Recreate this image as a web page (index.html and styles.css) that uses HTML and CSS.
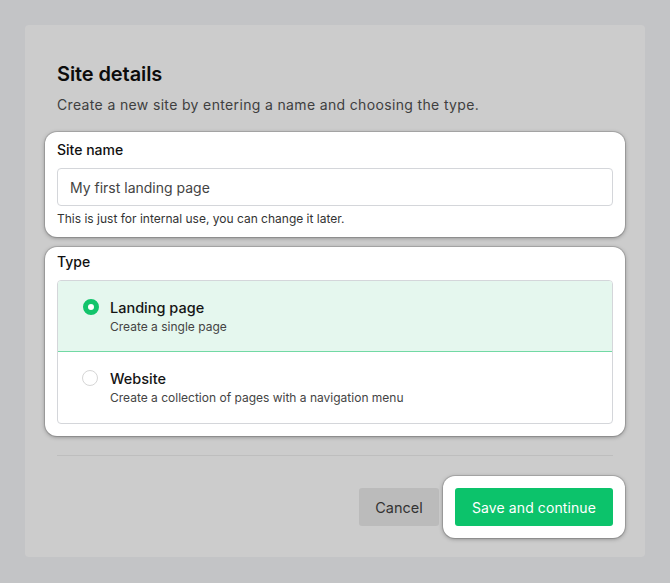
FILE: index.html
```html
<!DOCTYPE html>
<html lang="en">
<head>
<meta charset="utf-8">
<link rel="stylesheet" href="styles.css">
</head>
<body>
<div class="page">
  <div class="card">
    <h1 class="title">Site details</h1>
    <p class="subtitle">Create a new site by entering a name and choosing the type.</p>

    <section class="spot field">
      <label class="label">Site name</label>
      <div class="input">My first landing page</div>
      <p class="help">This is just for internal use, you can change it later.</p>
    </section>

    <section class="spot field type">
      <label class="label">Type</label>
      <div class="options">
        <div class="option selected">
          <span class="radio on"></span>
          <div class="otext">
            <div class="oname">Landing page</div>
            <div class="odesc">Create a single page</div>
          </div>
        </div>
        <div class="option">
          <span class="radio"></span>
          <div class="otext">
            <div class="oname">Website</div>
            <div class="odesc">Create a collection of pages with a navigation menu</div>
          </div>
        </div>
      </div>
    </section>

    <hr class="divider">

    <div class="actions">
      <button class="btn cancel">Cancel</button>
      <div class="spot btnspot">
        <button class="btn primary">Save and continue</button>
      </div>
    </div>
  </div>
</div>
</body>
</html>
```

FILE: styles.css
```css
* { box-sizing: border-box; }
html, body { margin: 0; padding: 0; }
body {
  background: #c3c4c6;
  font-family: Inter, "Noto Sans", "Liberation Sans", sans-serif;
  width: 670px;
  height: 583px;
  overflow: hidden;
}
.page { padding: 25px 25px 0 25px; }
.card {
  width: 620px;
  height: 532px;
  background: #cccccc;
  border-radius: 4px;
  padding: 37px 20px 0 20px;
}
.title {
  margin: 0 0 0 12px;
  font-size: 20px;
  line-height: 24px;
  font-weight: 600;
  color: #0c0c0c;
  letter-spacing: -0.1px;
}
.subtitle {
  margin: 10px 0 0 12px;
  font-size: 14px;
  line-height: 18px;
  color: #3f3f3f;
  letter-spacing: 0.35px;
}
.spot {
  background: #ffffff;
  border-radius: 12px;
  box-shadow: 0 0 0 1px rgba(0,0,0,0.12), 0 1px 4px rgba(0,0,0,0.35);
}
.field {
  margin-top: 18px;
  padding: 9px 12px 11px 12px;
  display: flex;
  flex-direction: column;
}
.field.type { margin-top: 10px; padding-top: 6px; padding-bottom: 12px; }
.label {
  font-size: 14px;
  line-height: 18px;
  font-weight: 500;
  color: #111;
}
.input {
  margin-top: 9px;
  height: 38px;
  border: 1px solid #d4d6da;
  border-radius: 4px;
  padding: 0 12px;
  display: flex;
  align-items: center;
  font-size: 14px;
  color: #444;
}
.help {
  margin: 6px 0 0 0;
  font-size: 12px;
  line-height: 14px;
  color: #333;
}
.options {
  margin-top: 9px;
  border: 1px solid #d4d6da;
  border-radius: 4px;
  overflow: hidden;
}
.option {
  height: 71px;
  display: flex;
  align-items: flex-start;
  padding: 17px 24px 0 24px;
}
.option.selected {
  background: #e5f7ee;
  border: 1px solid #72d9a4;
  margin: -1px -1px 0 -1px;
  height: 72px;
  padding-left: 24px;
  padding-top: 17px;
}
.option.selected .radio { margin-left: 1px; }
.option.selected .otext { margin-left: 11px; }
.radio {
  width: 16px;
  height: 16px;
  border-radius: 50%;
  border: 1px solid #d6d6d6;
  background: #fff;
  margin-top: 1px;
  flex: none;
}
.radio.on {
  border: 5px solid #12c46b;
  background: #fff;
}
.otext { margin-left: 12px; }
.oname {
  font-size: 14.5px;
  line-height: 20px;
  font-weight: 500;
  color: #141414;
}
.odesc {
  margin-top: 0px;
  font-size: 12px;
  line-height: 18px;
  color: #444;
}
.divider {
  margin: 19px 12px 0 12px;
  border: 0;
  border-top: 1px solid #bebebe;
}
.actions {
  margin-top: 20px;
  display: flex;
  justify-content: flex-end;
  align-items: center;
  gap: 4px;
}
.btn {
  font-family: Inter, "Noto Sans", "Liberation Sans", sans-serif;
  font-size: 14.5px;
  height: 38px;
  border: 0;
  border-radius: 3px;
  padding: 0;
}
.cancel {
  width: 80px;
  background: #bbbbbb;
  color: #333;
}
.btnspot { padding: 12px; }
.primary {
  width: 158px;
  background: #0cc36b;
  color: #fff;
  font-weight: 400;
  font-size: 14px;
  letter-spacing: 0.1px;
}
```
